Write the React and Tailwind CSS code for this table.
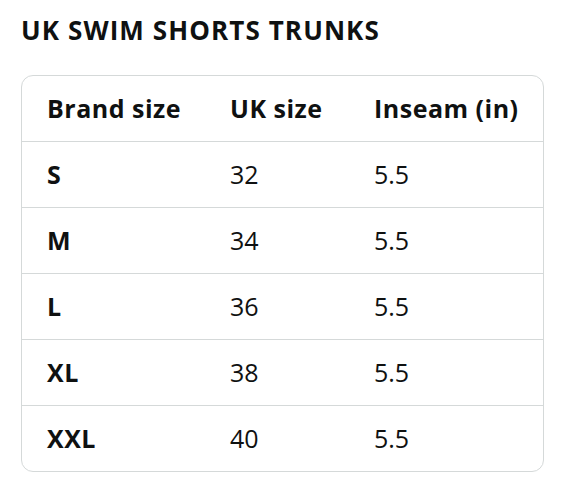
import React from 'react';

const rows = [
  ['S', '32', '5.5'],
  ['M', '34', '5.5'],
  ['L', '36', '5.5'],
  ['XL', '38', '5.5'],
  ['XXL', '40', '5.5'],
];

export default function App() {
  return (
    <div className="min-h-screen bg-white px-[21px] pt-[14px] text-[#0f1111]" style={{ fontFamily: '"Open Sans", sans-serif' }}>
      <h2 className="text-[26px] font-bold leading-[32px] tracking-[1.1px]">UK SWIM SHORTS TRUNKS</h2>
      <div className="mt-[29px] w-[523px] overflow-hidden rounded-[12px] border border-[#d5d9d9] divide-y divide-[#d5d9d9]">
        <div className="box-content grid h-[65px] grid-cols-[183px_144px_1fr] items-center text-[25px] font-bold tracking-[0.5px]">
          <div className="pl-[25px]">Brand size</div>
          <div className="pl-[25px]">UK size</div>
          <div className="pl-[25px]">Inseam (in)</div>
        </div>
        {rows.map((r) => (
          <div key={r[0]} className="box-content grid h-[65px] grid-cols-[183px_144px_1fr] items-center text-[25px]">
            <div className="pl-[25px] font-bold tracking-[0.5px]">{r[0]}</div>
            <div className="pl-[25px]">{r[1]}</div>
            <div className="pl-[25px]">{r[2]}</div>
          </div>
        ))}
      </div>
    </div>
  );
}
